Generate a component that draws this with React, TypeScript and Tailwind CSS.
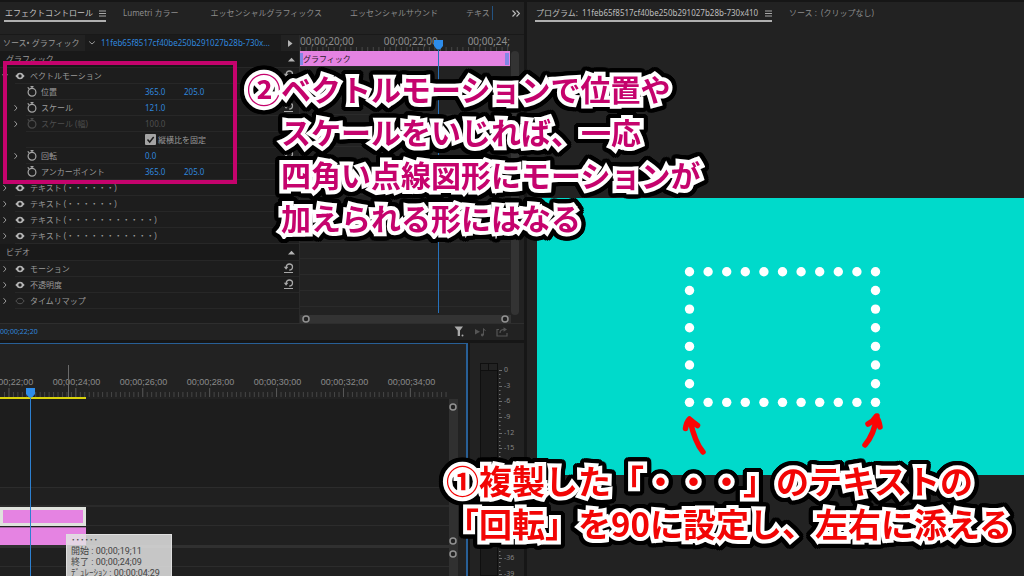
import React from "react";

const MENU_FONT = "font-['Noto_Sans','Noto_Sans_CJK_JP',sans-serif]";

function Menu() {
  return (
    <svg width="7" height="7" viewBox="0 0 7 7" className="shrink-0" aria-hidden="true">
      <path d="M0 1h7M0 3.5h7M0 6h7" stroke="#a8a8a8" strokeWidth="1" />
    </svg>
  );
}

function Chevron({ down }: { down?: boolean }) {
  return (
    <svg width="6" height="8" viewBox="0 0 6 8" className={down ? "shrink-0 rotate-90" : "shrink-0"} aria-hidden="true">
      <path d="M1.5 1.2 4 4 1.5 6.8" fill="none" stroke="#9a9a9a" strokeWidth="1" />
    </svg>
  );
}

function Eye({ dim }: { dim?: boolean }) {
  return (
    <svg width="10" height="8" viewBox="0 0 10 8" aria-hidden="true">
      <path
        d="M.9 4C2.2 1.9 3.5 1.3 5 1.3S7.8 1.9 9.1 4C7.8 6.1 6.5 6.7 5 6.7S2.2 6.1.9 4Z"
        fill={dim ? "none" : "#b9b9b9"}
        stroke={dim ? "#555" : "#b9b9b9"}
      />
      <circle cx="5" cy="4" r="1.7" fill="#1d1d1d" />
    </svg>
  );
}

function Stopwatch({ dim }: { dim?: boolean }) {
  return (
    <svg width="11" height="12" viewBox="0 0 11 12" aria-hidden="true">
      <g fill="none" stroke={dim ? "#4a4a4a" : "#a5a5a5"}>
        <circle cx="6" cy="6.2" r="3.9" strokeWidth="1.2" />
        <path d="M4.5.6h3M6 .8v1.500M1.700 1.400l1.500 1.300" strokeWidth="1.2" />
      </g>
    </svg>
  );
}

function Reset() {
  return (
    <svg width="11" height="11" viewBox="0 0 11 11" aria-hidden="true">
      <path d="M3.2 4C3.500 2 4.700 1 6.300 1 8.200 1 9.500 2.300 9.500 4.100 9.500 5.900 8.200 7.100 6.200 7.200" fill="none" stroke="#a8a8a8" strokeWidth="1.3" />
      <path d="M.8 3.800h4.600L3.100 6.700Z" fill="#a8a8a8" />
      <path d="M1 9.500h9" stroke="#a8a8a8" />
    </svg>
  );
}

function Up() {
  return (
    <svg width="7" height="5" viewBox="0 0 7 5" aria-hidden="true">
      <path d="M0 4.5 3.5 .8 7 4.5Z" fill="#b4b4b4" />
    </svg>
  );
}

function Knob() {
  return (
    <svg width="8" height="8" viewBox="0 0 8 8" className="shrink-0" aria-hidden="true">
      <circle cx="4" cy="4" r="3" fill="#222" stroke="#919191" strokeWidth="1.5" />
    </svg>
  );
}

function Playhead() {
  return (
    <svg width="9" height="10" viewBox="0 0 9 10" className="shrink-0" aria-hidden="true">
      <path d="M0 0h9v6L6 9.5H3L0 6Z" fill="#2d8ceb" />
    </svg>
  );
}

function SectionHeader({ label }: { label: string }) {
  return (
    <div className="flex h-[17px] items-center justify-between border-b border-[#272727] bg-[#191919] pl-1.5 pr-1">
      <span>{label}</span>
      <button aria-label={`${label}を折りたたむ`}>
        <Up />
      </button>
    </div>
  );
}

function Effect({ label, open, dim, reset }: { label: string; open?: boolean; dim?: boolean; reset?: boolean }) {
  return (
    <div className="flex h-4 items-center pl-0.5">
      <button aria-label={`${label}を開閉`} className="w-[13px] shrink-0">
        <Chevron down={open} />
      </button>
      <div className="flex h-4 grow items-center border-b border-[#272727] pr-[5px]">
        <button aria-label={`${label}の表示`} className="w-[15px] shrink-0">
          <Eye dim={dim} />
        </button>
        <span className="grow">{label}</span>
        {reset && (
          <button aria-label={`${label}をリセット`}>
            <Reset />
          </button>
        )}
      </div>
    </div>
  );
}

function Param({ label, values, expand, dim, reset }: { label: string; values: string[]; expand?: boolean; dim?: boolean; reset?: boolean }) {
  return (
    <div className="flex h-4 items-center pl-[13px]">
      <span className="w-[13px] shrink-0">{expand && <Chevron />}</span>
      <div className={dim ? "flex h-4 grow items-center border-b border-[#272727] pr-[5px] text-[#4e4e4e]" : "flex h-4 grow items-center border-b border-[#272727] pr-[5px]"}>
        <span className="w-[15px] shrink-0">
          <Stopwatch dim={dim} />
        </span>
        <span className="w-[104px] shrink-0">{label}</span>
        <div className="flex grow">
          {values.map((v) => (
            <button key={v} aria-label={`${label} ${v}`} className={dim ? "w-[39px] text-left" : "w-[39px] text-left text-[#2f86dd]"}>
              {v}
            </button>
          ))}
        </div>
        {reset && (
          <button aria-label={`${label}をリセット`}>
            <Reset />
          </button>
        )}
      </div>
    </div>
  );
}

function EffectList() {
  return (
    <div className="w-[300px] shrink-0 border-r border-[#2a2a2a] bg-[#1d1d1d] pb-3.5">
      <div className="flex h-4 items-center bg-[#222]">
        <span className="w-[85px] pl-[3px]">ソース• グラフィック</span>
        <button className="flex h-4 grow items-center bg-[#1b1b1b] pl-1" aria-haspopup="menu">
          <span className="w-3">
            <Chevron down />
          </span>
          <span className="text-[#2f86dd]">11feb65f8517cf40be250b291027b28b-730x...</span>
        </button>
        <button className="flex w-[18px] justify-center" aria-label="タイムラインビューの表示">
          <svg width="5" height="7" viewBox="0 0 5 7" aria-hidden="true">
            <path d="M0 0 4.5 3.5 0 7Z" fill="#b4b4b4" />
          </svg>
        </button>
      </div>
      <SectionHeader label="グラフィック" />
      <Effect label="ベクトルモーション" open reset />
      <Param label="位置" values={["365.0", "205.0"]} />
      <Param label="スケール" values={["121.0"]} expand reset />
      <Param label="スケール (幅)" values={["100.0"]} expand dim />
      <div className="flex h-4 items-center pl-[26px]">
        <label className="flex h-4 grow items-center gap-0.5 border-b border-[#272727] pl-[119px]">
          <span className="grid">
            <input
              type="checkbox"
              defaultChecked
              className="col-start-1 row-start-1 size-[11px] appearance-none rounded-[1px] bg-[#a4a4a4]"
            />
            <svg width="11" height="11" viewBox="0 0 11 11" className="pointer-events-none col-start-1 row-start-1" aria-hidden="true">
              <path d="M2.5 5.5 4.7 8 8.7 3" fill="none" stroke="#1d1d1d" strokeWidth="1.5" />
            </svg>
          </span>
          縦横比を固定
        </label>
      </div>
      <Param label="回転" values={["0.0"]} expand reset />
      <Param label="アンカーポイント" values={["365.0", "205.0"]} />
      <Effect label="テキスト (・・・・・・)" />
      <Effect label="テキスト (・・・・・・)" />
      <Effect label="テキスト (・・・・・・・・・・・)" />
      <Effect label="テキスト (・・・・・・・・・・・)" />
      <SectionHeader label="ビデオ" />
      <Effect label="モーション" reset />
      <Effect label="不透明度" reset />
      <Effect label="タイムリマップ" dim />
    </div>
  );
}

function KeyframeView() {
  return (
    <div className="relative flex grow flex-col overflow-hidden">
      <div className="relative h-4 overflow-hidden bg-[#222]">
        <div className="flex gap-[30px] whitespace-nowrap text-[10px] leading-3 text-[#8d8d8d]">
          <span>00;00;20;00</span>
          <span>00;00;22;00</span>
          <span>00;00;24;</span>
        </div>
        <svg className="absolute bottom-0 left-0 h-1 w-full" aria-hidden="true">
          {Array.from({ length: 38 }, (_, i) => (
            <rect key={i} x={i * 5.6} y={0} width={1} height={4} fill="#484848" />
          ))}
        </svg>
      </div>
      <div className="flex h-4 items-center justify-between border-b border-[#2a2a2a] bg-[#e583e2] text-[#2c1a2c]">
        <span className="h-3 w-[3px] bg-[#8287e6]" />
        <span className="grow">グラフィック</span>
        <span className="mr-px h-3 w-1 bg-[#8287e6]" />
      </div>
      {Array.from({ length: 15 }, (_, i) => (
        <div key={i} className="h-4 border-b border-[#2a2a2a]" />
      ))}
      <div className="grow" />
      <div className="absolute inset-y-0 left-[134px] flex flex-col items-center pt-[5px]">
        <Playhead />
        <div className="mb-0.5 w-px grow bg-[#2672bd]" />
      </div>
    </div>
  );
}

function EffectControls() {
  return (
    <section className="flex flex-col bg-[#222] pb-px">
      <nav className="flex h-8 items-start overflow-hidden whitespace-nowrap pl-1 pt-1 text-[#8c8c8c]">
        <button className="flex h-4 w-[102px] shrink-0 items-center justify-between border-b-2 border-[#b0b0b0] pl-px text-[#c4c4c4]">
          エフェクトコントロール
          <Menu />
        </button>
        <button className="ml-[17px] h-3.5">Lumetri カラー</button>
        <button className="ml-8 h-3.5">エッセンシャルグラフィックス</button>
        <button className="ml-7 h-3.5">エッセンシャルサウンド</button>
        <button className="ml-7 h-3.5 w-[27px] overflow-hidden border-r border-[#245380] text-left">テキスト</button>
        <button aria-label="その他のパネル" className="ml-auto mr-1 h-3.5">
          <svg width="8" height="7" viewBox="0 0 8 7" aria-hidden="true">
            <path d="M.5.5 3.5 3.5.5 6.5M4.5.5 7.5 3.5 4.5 6.5" fill="none" stroke="#bbb" strokeWidth="1.2" />
          </svg>
        </button>
      </nav>
      <div className="flex border-t border-[#191919]">
        <EffectList />
        <div className="flex grow flex-col">
          <div className="flex grow">
            <KeyframeView />
            <div className="mr-1 flex w-[10px] flex-col pt-4">
              <div className="mx-px grow rounded bg-[#333]" />
            </div>
          </div>
          <div className="mr-[13px] flex h-2 items-center justify-between bg-[#333] px-0.5">
            <Knob />
            <Knob />
          </div>
        </div>
      </div>
      <div className="flex h-4 items-center border-t border-[#2e2e2e]">
        <button className="text-[7px] text-[#2f86dd]">00;00;22;20</button>
        <div className="ml-auto mr-4 flex items-center gap-2.5">
          <button aria-label="フィルター">
            <svg width="11" height="11" viewBox="0 0 11 11" aria-hidden="true">
              <path d="M1.500 .5h8.500L7 4.500V10H4.700V4.500Z" fill="#aaa" />
              <circle cx="9.500" cy="9.500" r="1" fill="#aaa" />
            </svg>
          </button>
          <button aria-label="オーディオのみ再生">
            <svg width="12" height="10" viewBox="0 0 12 10" aria-hidden="true">
              <path d="M1 2v5.5l5-2.700Z" fill="#555" />
              <path d="M9.5 8V1.500L11.500 4" fill="none" stroke="#555" />
              <circle cx="8.3" cy="8" r="1.4" fill="#555" />
            </svg>
          </button>
          <button aria-label="書き出し">
            <svg width="12" height="10" viewBox="0 0 12 10" aria-hidden="true">
              <path d="M3 2.5H1V9h10V6M4 6c0-2 1-3.500 4-3.500" fill="none" stroke="#555" strokeWidth="1.2" />
              <path d="M7.5.3v4.400L11 2.500Z" fill="#555" />
            </svg>
          </button>
        </div>
      </div>
    </section>
  );
}

const RULER = ["00;00;22;00", "00;00;24;00", "00;00;26;00", "00;00;28;00", "00;00;30;00", "00;00;32;00", "00;00;34;00"];

function Timeline() {
  return (
    <section className="relative flex grow flex-col overflow-hidden border-r-2 border-t border-[#285f96] bg-[#222]">
      <div className="h-[31px]" />
      <div className="flex h-[13px] items-center text-[9px] text-[#8a8a8a]">
        <div className="-ml-6 flex font-['Liberation_Sans',sans-serif]">
          {RULER.map((t) => (
            <span key={t} className="w-[67px] text-center">
              {t}
            </span>
          ))}
        </div>
      </div>
      <svg className="h-[9px] w-[449px]" aria-hidden="true">
        {Array.from({ length: 100 }, (_, i) => {
          const major = i % 15 === 1;
          return <rect key={i} x={4 + i * 4.46} y={major ? 0 : 4} width={1} height={major ? 9 : 5} fill={major ? "#5a5a5a" : "#464646"} />;
        })}
      </svg>
      <div className="h-0.5 w-[86px] bg-[#d9d30c]" />
      <div className="flex grow">
        <div className="flex grow flex-col bg-[#1d1d1d]">
          <div className="h-[89px] border-b border-[#2c2c2c]" />
          <div className="h-[19px] border-b-2 border-[#2a2a2a] bg-[#202020]" />
          <div className="h-[19px] border-b border-[#2c2c2c] bg-[#202020]">
            <div className="h-[19px] w-[86px] border-[3px] border-[#dfe2dd] bg-[#e583e2]" />
          </div>
          <div className="h-[19px] bg-[#202020] pt-px">
            <div className="h-[18px] w-[86px] border-t border-[#a56aa4] bg-[#e583e2]" />
          </div>
          <div className="h-[3px] bg-[#303030]" />
          <div className="h-[19px] border-b border-[#2c2c2c] bg-[#202020]" />
          <div className="grow bg-[#202020]" />
        </div>
        <div className="mr-2 flex w-[9px] flex-col bg-[#303030] pt-1">
          <Knob />
          <div className="h-[126px]" />
          <Knob />
          <div className="h-[5px]" />
          <Knob />
        </div>
      </div>
      <div className="absolute left-[68px] top-[21px] h-8 w-px bg-[#6a6a6a]" />
      <div className="absolute inset-y-0 left-[26px] flex flex-col items-center pt-11">
        <Playhead />
        <div className="w-px grow bg-[#2d80d0]" />
      </div>
      <div
        role="tooltip"
        className="absolute left-[66px] top-[190px] w-[106px] whitespace-nowrap border border-[#dedede] bg-[#e4e4e4]/85 px-1 text-[9px] leading-[11px] text-[#444] font-['Roboto','Noto_Sans_CJK_JP',sans-serif]"
      >
        <p>･･････</p>
        <p>開始 : 00;00;19;11</p>
        <p>終了 : 00;00;24;09</p>
        <p>ﾃﾞｭﾚｰｼｮﾝ : 00;00;04;29</p>
      </div>
    </section>
  );
}

const DB = [0, -3, -6, -9, -12, -15, -18, -21, -24, -27, -30, -33, -36, -39];

function AudioMeters() {
  return (
    <section className="flex w-[54px] shrink-0 gap-px overflow-hidden bg-[#222] pl-[10px] pt-5">
      <div className="w-[18px] border border-[#0f0f0f] bg-[#1b1b1b]">
        <div className="grid h-[7px] grid-cols-2 divide-x divide-[#0f0f0f] border-b border-[#0f0f0f] bg-[#222]">
          <span />
          <span />
        </div>
      </div>
      <div className="flex h-[216px] flex-col justify-between pt-0.5 text-[7px] leading-[10px] text-[#858585]">
        {DB.map((d) => (
          <div key={d} className="flex items-center gap-0.5">
            <svg width="3" height="10" viewBox="0 0 3 10" className="overflow-visible" aria-hidden="true">
              <path d="M0 5.5h3M0 9.5h1.5M0 13.5h1.5M0 17.5h1.5" stroke="#707070" />
            </svg>
            {d}
          </div>
        ))}
      </div>
    </section>
  );
}

const COLS = Array.from({ length: 11 }, (_, i) => 152.5 + i * 18.6);
const ROWS = Array.from({ length: 8 }, (_, i) => 73.8 + i * 18.65);

function ProgramMonitor() {
  return (
    <section className="flex min-w-0 grow flex-col bg-[#222] pl-2">
      <nav className="flex h-[196px] items-start whitespace-nowrap pt-1 text-[#8c8c8c]">
        <button className="flex h-4 w-[237px] items-center justify-between border-b-2 border-[#b0b0b0] pl-px text-[#bdbdbd]">
          <span>プログラム:&nbsp; 11feb65f8517cf40be250b291027b28b-730x410</span>
          <Menu />
        </button>
        <button className="ml-[17px] h-3.5">ソース :&nbsp; (クリップなし)</button>
      </nav>
      <div className="ml-0.5 h-[277px] overflow-hidden bg-[#00dacb]">
        <svg width="487" height="277" viewBox="0 0 487 277" role="img" aria-label="点線の四角形">
          {ROWS.flatMap((y, r) =>
            COLS.filter((_, c) => r === 0 || r === 7 || c === 0 || c === 10).map((x) => (
              <circle key={`${x}-${y}`} cx={x} cy={y} r="4.7" fill="#fff" />
            )),
          )}
          <g fill="none" stroke="#fa0505" strokeWidth="5.5" strokeLinecap="round" strokeLinejoin="round">
            <path d="M166 254C160 247 156 236 153 222M148.500 230.500Q149.500 224 152.500 221 156 224 160.500 227.500" />
            <path d="M328 247C334 240 338 231 340 218M331 226Q336.500 223 339 218.500 342 222 343 229" />
          </g>
        </svg>
      </div>
    </section>
  );
}

export default function App() {
  return (
    <main className={`relative flex h-screen overflow-hidden bg-[#161616] pt-0.5 text-[8px] leading-[14px] text-[#9a9a9a] ${MENU_FONT}`}>
      <div className="flex w-[524px] shrink-0 flex-col gap-[3px]">
        <EffectControls />
        <div className="flex min-h-0 grow gap-0.5">
          <Timeline />
          <AudioMeters />
        </div>
      </div>
      <div className="ml-[3px] flex min-w-0 grow">
        <ProgramMonitor />
      </div>

      <div className="absolute left-[3px] top-[61px] h-[123px] w-[234px] border-4 border-[#c5036d]" />
      <div className="absolute left-[247px] top-[67px] flex whitespace-nowrap text-[30px] font-bold leading-[43px] text-[#c5036d] font-['Noto_Sans_CJK_JP',sans-serif] [-webkit-text-stroke:8px_#fff] [paint-order:stroke] [stroke-linejoin:round] [filter:drop-shadow(2px_0_0_#000)_drop-shadow(-2px_0_0_#000)_drop-shadow(0_2px_0_#000)_drop-shadow(0_-2px_0_#000)_drop-shadow(1px_1px_0_#000)_drop-shadow(-1px_-1px_0_#000)_drop-shadow(1px_-1px_0_#000)_drop-shadow(-1px_1px_0_#000)]">
        <span className="text-[34px]">②</span>
        <p>
          ベクトルモーションで位置や
          <br />
          スケールをいじれば、一応
          <br />
          四角い点線図形にモーションが
          <br />
          加えられる形にはなる
        </p>
      </div>
      <div className="absolute left-[446px] top-[459px] whitespace-nowrap text-[33px] font-bold leading-[43px] text-[#f20505] font-['Noto_Sans_CJK_JP',sans-serif] [-webkit-text-stroke:8px_#fff] [paint-order:stroke] [stroke-linejoin:round] [filter:drop-shadow(2px_0_0_#000)_drop-shadow(-2px_0_0_#000)_drop-shadow(0_2px_0_#000)_drop-shadow(0_-2px_0_#000)_drop-shadow(1px_1px_0_#000)_drop-shadow(-1px_-1px_0_#000)_drop-shadow(1px_-1px_0_#000)_drop-shadow(-1px_1px_0_#000)]">
        <p>①複製した「・・・」のテキストの</p>
        <p>「回転」を90に設定し、左右に添える</p>
      </div>
    </main>
  );
}
